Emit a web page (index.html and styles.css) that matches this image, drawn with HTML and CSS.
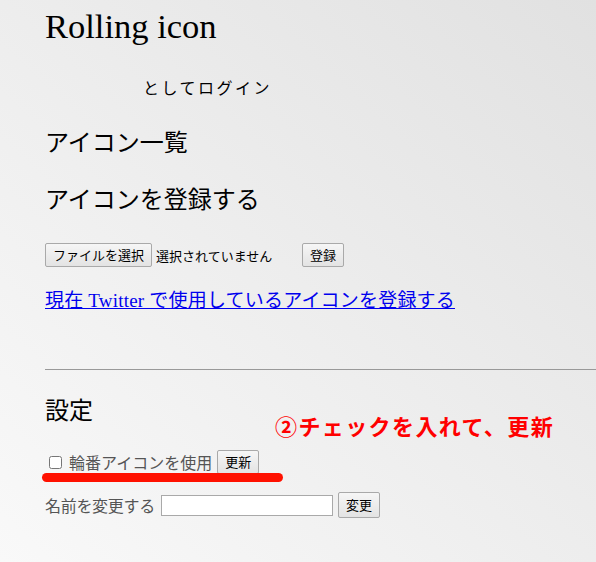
FILE: index.html
```html
<!DOCTYPE html>
<html lang="ja">
<head>
<meta charset="utf-8">
<title>Rolling icon</title>
<link rel="stylesheet" href="styles.css">
</head>
<body>
<div class="page">
  <h1 class="title">Rolling icon</h1>
  <p class="login"><span class="user"></span>としてログイン</p>
  <h2 class="section">アイコン一覧</h2>
  <h2 class="section">アイコンを登録する</h2>
  <form class="upload">
    <span class="file"><button type="button" class="btn">ファイルを選択</button><span class="file-name">選択されていません</span></span>
    <button type="button" class="btn">登録</button>
  </form>
  <p class="twitter"><a href="#">現在 Twitter で使用しているアイコンを登録する</a></p>
  <hr class="rule">
  <h2 class="section settings">設定</h2>
  <div class="setting-row rolling">
    <label class="check"><input type="checkbox">輪番アイコンを使用</label><button type="button" class="btn">更新</button>
    <span class="marker"></span>
  </div>
  <div class="setting-row rename">
    <span class="label">名前を変更する</span>
    <input type="text" class="name-input">
    <button type="button" class="btn">変更</button>
  </div>
  <div class="note">②チェックを入れて、更新</div>
</div>
</body>
</html>
```
FILE: styles.css
```css
html, body {
  margin: 0;
  padding: 0;
  height: 100%;
}
body {
  background: linear-gradient(to top right, #f9f9f9 0%, #ededed 50%, #e1e1e1 100%);
  font-family: "Liberation Serif", "Noto Sans CJK JP", serif;
  color: #000;
  overflow: hidden;
}
.page {
  position: relative;
  padding: 0 0 0 45px;
  min-height: 562px;
}
.title {
  margin: 0;
  padding-top: 6px;
  font-size: 34.5px;
  font-weight: normal;
  line-height: 40px;
}
.login {
  margin: 32px 0 0;
  font-size: 16px;
  line-height: 22px;
  letter-spacing: 2.5px;
}
.user {
  display: inline-block;
  width: 98px;
}
.section {
  margin: 0;
  font-size: 24px;
  font-weight: normal;
  line-height: 30px;
}
.login + .section {
  margin-top: 28px;
}
.section + .section {
  margin-top: 27px;
}
.upload {
  margin-top: 28px;
  display: flex;
  align-items: center;
  height: 24px;
}
.file {
  display: inline-flex;
  align-items: center;
  width: 257px;
}
.file-name {
  font-family: "Noto Sans CJK JP", sans-serif;
  font-size: 13px;
  margin-left: 4px;
}
.btn {
  font-family: "Noto Sans CJK JP", sans-serif;
  font-size: 13px;
  line-height: 16px;
  padding: 3px 7px;
  border: 1px solid #a9a9a9;
  border-radius: 2px;
  background: linear-gradient(#f6f6f6, #e3e3e3);
  color: #000;
  margin: 0;
}
.twitter {
  margin: 21px 0 0;
  font-size: 19px;
  line-height: 26px;
  letter-spacing: 0.2px;
}
.twitter a {
  color: #0000ee;
}
.rule {
  margin: 55px 0 0;
  border: 0;
  border-top: 1px solid #999;
  height: 0;
}
.settings {
  margin-top: 26px;
}
.setting-row {
  display: flex;
  align-items: center;
}
.rolling {
  position: relative;
  margin-top: 24px;
  height: 24px;
}
.check {
  color: #555;
  font-size: 16px;
  display: inline-flex;
  align-items: center;
}
.check input {
  margin: 0 7px 0 4px;
  width: 13px;
  height: 13px;
}
.rolling .btn {
  margin-left: 5px;
}
.marker {
  position: absolute;
  left: -3px;
  top: 23px;
  width: 241px;
  height: 9px;
  border-radius: 5px;
  background: #ff1100;
}
.rename {
  margin-top: 18px;
  height: 26px;
}
.label {
  color: #555;
  font-size: 16px;
  letter-spacing: -0.3px;
}
.name-input {
  margin: 0 5px 0 6px;
  width: 166px;
  height: 17px;
  padding: 1px 2px;
  border: 1px solid #a9a9a9;
  background: #fff;
}
.rename .btn {
  padding: 4px 7px;
}
.note {
  position: absolute;
  left: 275px;
  top: 410px;
  color: #ff0000;
  font-family: "Noto Sans CJK JP", sans-serif;
  font-weight: bold;
  font-size: 22px;
  line-height: 30px;
  letter-spacing: 1.4px;
}
```
